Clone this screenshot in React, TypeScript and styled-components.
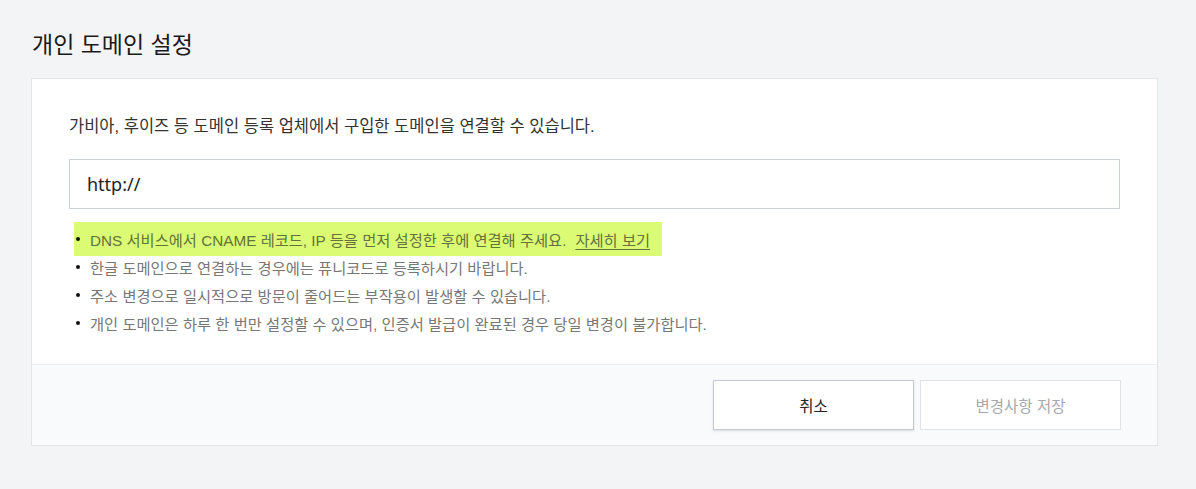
import React from "react";
import styled, { createGlobalStyle } from "styled-components";

const Global = createGlobalStyle`
  html, body { margin: 0; padding: 0; background: #f3f4f6; }
  body { font-family: "Liberation Sans", "Noto Sans CJK KR", sans-serif; }
  * { box-sizing: border-box; }
`;

const Page = styled.div`
  padding: 28px 38px 44px 31px;
  width: 1196px;
`;

const Title = styled.h1`
  margin: 0 0 16px 1px;
  font-size: 23px;
  line-height: 34px;
  font-weight: 400;
  color: #1a1a1a;
`;

const Card = styled.section`
  background: #fff;
  border: 1px solid #e3e5ea;
`;

const Body = styled.div`
  padding: 36px 37px 27px;
`;

const Desc = styled.p`
  margin: 0 0 22px;
  font-size: 16.5px;
  line-height: 22px;
  color: #333;
`;

const Input = styled.input`
  display: block;
  width: 100%;
  height: 50px;
  border: 1px solid #cdd2da;
  padding: 0 17px;
  font-family: "Noto Sans", "Noto Sans CJK KR", sans-serif;
  font-size: 18px;
  color: #222;
  outline: none;
  background: #fff;
  &::placeholder { color: #222; }
`;

const List = styled.ul`
  margin: 16px 0 0;
  padding: 0;
  list-style: none;
`;

const Item = styled.li<{ $hl?: boolean }>`
  display: flex;
  align-items: center;
  gap: 10px;
  width: fit-content;
  height: 28px;
  padding: 0 12px 0 2px;
  margin: ${p => (p.$hl ? "-3px 0 -3px 5px" : "0 0 0 5px")};
  box-sizing: content-box;
  border-top: ${p => (p.$hl ? "3px solid #dafb73" : "0")};
  border-bottom: ${p => (p.$hl ? "3px solid #dafb73" : "0")};
  background: ${p => (p.$hl ? "#dafb73" : "transparent")};
  font-size: 15.3px;
  color: ${p => (p.$hl ? "#63733a" : "#777")};
  &::before {
    content: "";
    width: 4px;
    height: 4px;
    border-radius: 50%;
    background: #111;
    flex: none;
  }
`;

const Link = styled.a`
  margin-left: 9px;
  color: inherit;
  text-decoration: underline;
  text-underline-offset: 3px;
`;

const Footer = styled.div`
  display: flex;
  justify-content: flex-end;
  gap: 6px;
  padding: 15px 36px 15px;
  background: #f9fafc;
  border-top: 1px solid #eceef2;
`;

const Button = styled.button<{ $primary?: boolean }>`
  width: 201px;
  height: 50px;
  background: #fff;
  border: 1px solid ${p => (p.$primary ? "#c4c9d1" : "#dfe2e7")};
  box-shadow: ${p => (p.$primary ? "0 1px 2px rgba(0,0,0,0.12)" : "none")};
  font-family: "Liberation Sans", "Noto Sans CJK KR", sans-serif;
  font-size: 15.5px;
  color: ${p => (p.$primary ? "#222" : "#a6a9ae")};
  cursor: pointer;
`;

export default function App() {
  return (
    <>
      <Global />
      <Page>
        <Title>개인 도메인 설정</Title>
        <Card>
          <Body>
            <Desc>가비아, 후이즈 등 도메인 등록 업체에서 구입한 도메인을 연결할 수 있습니다.</Desc>
            <Input placeholder="http://" />
            <List>
              <Item $hl>
                <span>
                  DNS 서비스에서 CNAME 레코드, IP 등을 먼저 설정한 후에 연결해 주세요.
                  <Link href="#">자세히 보기</Link>
                </span>
              </Item>
              <Item>한글 도메인으로 연결하는 경우에는 퓨니코드로 등록하시기 바랍니다.</Item>
              <Item>주소 변경으로 일시적으로 방문이 줄어드는 부작용이 발생할 수 있습니다.</Item>
              <Item>개인 도메인은 하루 한 번만 설정할 수 있으며, 인증서 발급이 완료된 경우 당일 변경이 불가합니다.</Item>
            </List>
          </Body>
          <Footer>
            <Button $primary>취소</Button>
            <Button disabled>변경사항 저장</Button>
          </Footer>
        </Card>
      </Page>
    </>
  );
}
